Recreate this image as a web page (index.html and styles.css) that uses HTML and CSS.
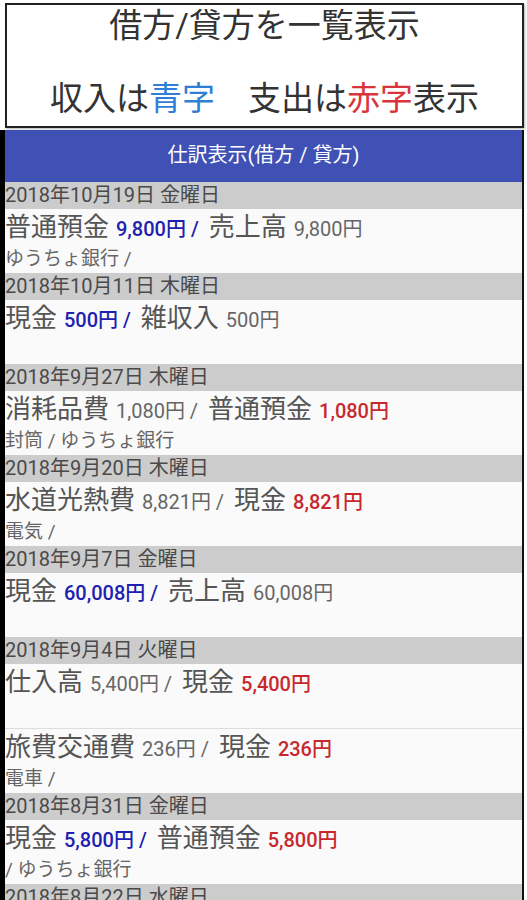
FILE: index.html
```html
<!DOCTYPE html>
<html lang="ja">
<head>
    <meta charset="UTF-8">
    <meta name="viewport" content="width=device-width, initial-scale=1.0">
    <title>仕訳表示</title>
    <link rel="stylesheet" href="styles.css">
</head>
<body>
    <div class="summary">
        <p>借方/貸方を一覧表示</p>
        <p>&nbsp;</p>
        <p>収入は<span class="blue">青字</span>　支出は<span class="red">赤字</span>表示</p>
    </div>

    <div class="journal">
        <div class="journal-title">仕訳表示(借方 / 貸方)</div>

        <div class="day">2018年10月19日 金曜日</div>
        <div class="entry">
            <div class="line">
                <span class="account">普通預金</span>
                <span class="amount income">9,800円 /</span>
                <span class="account">売上高</span>
                <span class="amount">9,800円</span>
            </div>
            <div class="memo">ゆうちょ銀行 /</div>
        </div>

        <div class="day">2018年10月11日 木曜日</div>
        <div class="entry">
            <div class="line">
                <span class="account">現金</span>
                <span class="amount income">500円 /</span>
                <span class="account">雑収入</span>
                <span class="amount">500円</span>
            </div>
            <div class="memo"></div>
        </div>

        <div class="day">2018年9月27日 木曜日</div>
        <div class="entry">
            <div class="line">
                <span class="account">消耗品費</span>
                <span class="amount">1,080円 /</span>
                <span class="account">普通預金</span>
                <span class="amount expense">1,080円</span>
            </div>
            <div class="memo">封筒 / ゆうちょ銀行</div>
        </div>

        <div class="day">2018年9月20日 木曜日</div>
        <div class="entry">
            <div class="line">
                <span class="account">水道光熱費</span>
                <span class="amount">8,821円 /</span>
                <span class="account">現金</span>
                <span class="amount expense">8,821円</span>
            </div>
            <div class="memo">電気 /</div>
        </div>

        <div class="day">2018年9月7日 金曜日</div>
        <div class="entry">
            <div class="line">
                <span class="account">現金</span>
                <span class="amount income">60,008円 /</span>
                <span class="account">売上高</span>
                <span class="amount">60,008円</span>
            </div>
            <div class="memo"></div>
        </div>

        <div class="day">2018年9月4日 火曜日</div>
        <div class="entry">
            <div class="line">
                <span class="account">仕入高</span>
                <span class="amount">5,400円 /</span>
                <span class="account">現金</span>
                <span class="amount expense">5,400円</span>
            </div>
            <div class="memo"></div>
        </div>
        <div class="entry">
            <div class="line">
                <span class="account">旅費交通費</span>
                <span class="amount">236円 /</span>
                <span class="account">現金</span>
                <span class="amount expense">236円</span>
            </div>
            <div class="memo">電車 /</div>
        </div>

        <div class="day">2018年8月31日 金曜日</div>
        <div class="entry">
            <div class="line">
                <span class="account">現金</span>
                <span class="amount income">5,800円 /</span>
                <span class="account">普通預金</span>
                <span class="amount expense">5,800円</span>
            </div>
            <div class="memo">/ ゆうちょ銀行</div>
        </div>

        <div class="day">2018年8月22日 水曜日</div>
        <div class="entry">
            <div class="line">
                <span class="account">消耗品費</span>
                <span class="amount">540円 /</span>
                <span class="account">現金</span>
                <span class="amount expense">540円</span>
            </div>
            <div class="memo"></div>
        </div>
    </div>
</body>
</html>
```

FILE: styles.css
```css
body {
    margin: 0;
    background-color: #ffffff;
    font-family: Roboto, "Noto Sans CJK JP", sans-serif;
    color: #555555;
}

.summary {
    margin: 3px 3px 0 5px;
    height: 125px;
    box-sizing: border-box;
    border: 2px solid #222222;
    padding-top: 3px;
    text-align: center;
    font-size: 33px;
    color: #333333;
    box-shadow: 1px 1px 2px rgba(0, 0, 0, 0.3);
}

.summary p {
    margin: 0;
    line-height: 36.5px;
}

.blue {
    color: #2f7fd6;
}

.red {
    color: #d8343c;
}

.journal {
    margin: 2px 3px 0 0;
    border-left: 5px solid #000000;
    border-right: 2px solid #111111;
    background-color: #fafafa;
}

.journal-title {
    height: 52px;
    line-height: 50px;
    background-color: #3f51b5;
    color: #ffffff;
    text-align: center;
    font-size: 20px;
}

.day {
    height: 27px;
    line-height: 27px;
    background-color: #cccccc;
    font-size: 20px;
    color: #4a4a4a;
    white-space: nowrap;
}

.entry {
    height: 64px;
    white-space: nowrap;
}

.entry + .entry {
    border-top: 1px solid #dddddd;
}

.line {
    height: 37px;
    line-height: 37px;
}

.account {
    font-size: 26px;
    color: #555555;
    margin-right: 3px;
}

.amount {
    font-size: 20px;
    color: #666666;
    margin-right: 6px;
}

.amount.income {
    color: #2020b0;
    font-weight: 500;
}

.amount.expense {
    color: #c8282d;
    font-weight: 500;
}

.memo {
    height: 25px;
    line-height: 25px;
    font-size: 19px;
    color: #666666;
}
```
